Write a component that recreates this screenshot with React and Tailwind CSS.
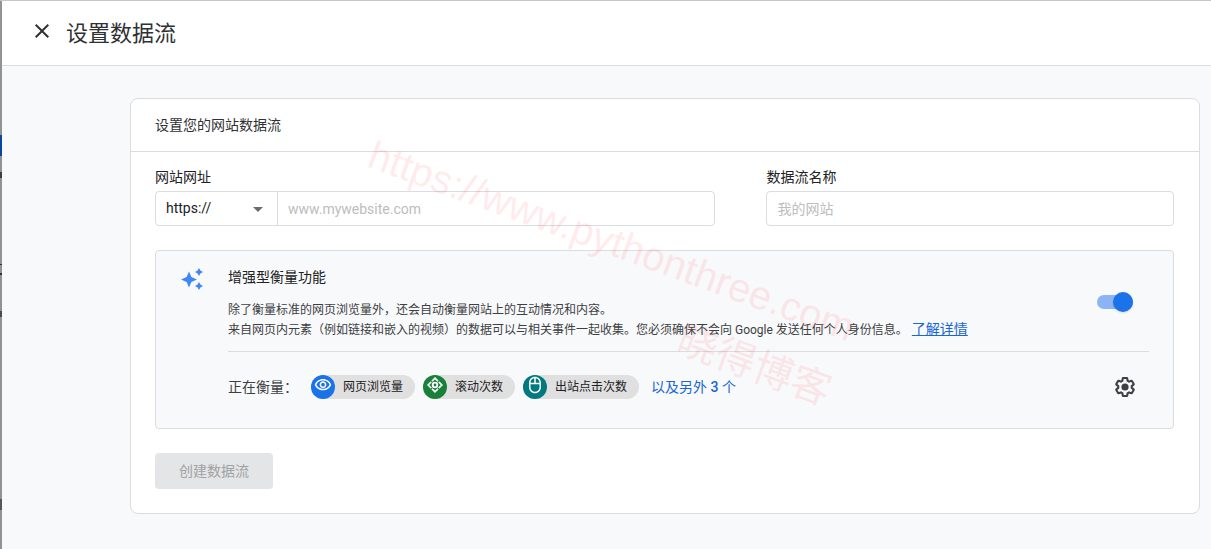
import { useState } from 'react'
import clsx from 'clsx'
import { MdArrowDropDown, MdClose, MdOutlineMouse, MdOutlineVisibility } from 'react-icons/md'

function SparkleIcon() {
  return (
    <svg viewBox="0 0 24 24" className="w-6 h-6 shrink-0" fill="#4285f4" aria-hidden="true">
      <path d="M9 4.500 11.400 10.100 17 12.500 11.400 14.900 9 20.500 6.600 14.900 1 12.500 6.600 10.100z" />
      <path d="M19 1 20.400 3.600 23 5 20.400 6.400 19 9 17.600 6.400 15 5 17.600 3.600z" />
      <path d="M19 15 20.400 17.600 23 19 20.400 20.400 19 23 17.600 20.400 15 19 17.600 17.600z" />
    </svg>
  )
}

function ScrollIcon() {
  return (
    <svg viewBox="0 0 16 16" className="w-4 h-4" fill="none" stroke="#fff" aria-hidden="true">
      <path d="M8 1.200 14.800 8 8 14.800 1.200 8z" strokeWidth="1.700" />
      <path d="M3.200 3.200 5.200 5.200M12.800 3.200 10.800 5.200M3.200 12.800 5.200 10.800M12.800 12.800 10.800 10.800" stroke="#188038" strokeWidth="1.200" />
      <circle cx="8" cy="8" r="2.300" strokeWidth="1.800" />
    </svg>
  )
}

function GearIcon() {
  return (
    <svg viewBox="0 0 24 24" className="w-6 h-6" aria-hidden="true">
      <path
        transform="translate(1.200 1.200) scale(0.900)"
        fill="none"
        stroke="currentColor"
        strokeWidth="2.300"
        strokeLinejoin="round"
        d="M19.430 12.980c.040-.320.070-.640.070-.980 0-.340-.030-.660-.070-.980l2.110-1.650c.190-.150.240-.420.120-.640l-2-3.460a.5.5 0 0 0-.610-.220l-2.490 1c-.520-.4-1.080-.730-1.690-.980l-.380-2.650A.488.488 0 0 0 14 2h-4c-.250 0-.460.180-.490.420l-.380 2.650c-.610.250-1.170.590-1.690.980l-2.490-1a.5.5 0 0 0-.610.220l-2 3.460c-.130.220-.070.490.120.640l2.110 1.650c-.040.320-.070.650-.070.980 0 .330.030.660.070.980l-2.110 1.650c-.190.150-.240.420-.120.640l2 3.460a.5.5 0 0 0 .610.220l2.490-1c.520.4 1.080.730 1.690.980l.380 2.650c.030.240.240.420.490.420h4c.250 0 .460-.180.490-.420l.380-2.650c.610-.250 1.170-.590 1.690-.980l2.490 1a.5.5 0 0 0 .610-.220l2-3.460c.120-.220.070-.490-.120-.640z"
      />
      <circle cx="12" cy="12" r="3.600" fill="currentColor" />
    </svg>
  )
}

const CHIPS = [
  { label: '网页浏览量', bg: 'bg-[#1a73e8]', icon: <MdOutlineVisibility size={18} /> },
  { label: '滚动次数', bg: 'bg-[#188038]', icon: <ScrollIcon /> },
  { label: '出站点击次数', bg: 'bg-[#00797f]', icon: <MdOutlineMouse size={18} /> },
]

function Chip({ label, bg, icon }) {
  return (
    <li className="flex items-center h-6 rounded-full bg-[#e0e0e0] pr-3">
      <span className={clsx('flex justify-center w-6 h-6 pb-1 items-center rounded-full text-white', bg)}>
        {icon}
      </span>
      <span className="ml-2 text-xs text-[#202124]">{label}</span>
    </li>
  )
}

function Toggle({ checked, onChange }) {
  return (
    <label className="relative flex items-center w-9 h-5 shrink-0 cursor-pointer">
      <input
        type="checkbox"
        checked={checked}
        onChange={e => onChange(e.target.checked)}
        aria-label="增强型衡量功能"
        className="peer absolute inset-0 w-full h-full opacity-0 cursor-pointer"
      />
      <span className="w-full h-[14px] rounded-full bg-gray-300 peer-checked:bg-[#8cb4f5]" />
      <span className="absolute left-0 w-5 h-5 rounded-full bg-white shadow peer-checked:left-4 peer-checked:bg-[#1a73e8] pointer-events-none" />
    </label>
  )
}

// Sliver of the dimmed page left visible behind the sheet
function Backdrop() {
  return (
    <div className="w-[2px] shrink-0 bg-[#919294] flex flex-col" aria-hidden="true">
      <div className="h-[134px]" />
      <div className="h-[21px] bg-[#0b45a0]" />
      <div className="mt-4 h-[6px] bg-[#3c3d3f]" />
      <div className="mt-[86px] h-px bg-[#2f3033]" />
      <div className="mt-2 h-[2px] bg-[#2f3033]" />
      <div className="mt-9 h-[6px] bg-[#4b4c4f]" />
      <div className="mt-[182px] h-[11px] bg-[#55565a]" />
    </div>
  )
}

function Watermark() {
  return (
    <div
      aria-hidden="true"
      className="absolute left-[382px] top-[120px] origin-top-left rotate-[20deg] text-right text-[40px] leading-[68px] whitespace-nowrap text-[#ff0014]/8 pointer-events-none select-none font-['Liberation_Sans','Noto_Sans_CJK_SC',sans-serif]"
    >
      <p>https://www.pythonthree.com</p>
      <p>晓得博客</p>
    </div>
  )
}

export default function App() {
  const [protocol, setProtocol] = useState('https://')
  const [url, setUrl] = useState('')
  const [name, setName] = useState('')
  const [enhanced, setEnhanced] = useState(true)

  return (
    <div className="relative flex min-h-screen overflow-hidden border-t border-[#c6c6c8] bg-[#f8f9fa] text-sm text-[#202124] font-[Roboto,'Noto_Sans_CJK_SC',sans-serif]">
      <Backdrop />

      <div className="flex-1 min-w-0">
        <header className="flex items-center h-[65px] pl-7 bg-white border-b border-[#dadce0]">
          <button type="button" aria-label="关闭" className="pb-1 text-[#303134]">
            <MdClose size={24} />
          </button>
          <h1 className="ml-3 pt-px text-[22px] leading-7 text-[#303134]">设置数据流</h1>
        </header>

        <main className="pt-8 pl-32 pr-[11px] pb-8">
          <section className="rounded-lg border border-[#dadce0] bg-white">
            <h2 className="px-6 py-4 leading-5 border-b border-[#dadce0] text-[#303134]">设置您的网站数据流</h2>

            <form className="pl-6 pr-[25px] pt-[15px] pb-6" onSubmit={e => e.preventDefault()}>
              <div className="grid grid-cols-[11fr_8fr] gap-[51px]">
                <div>
                  <label htmlFor="site-url" className="block leading-5 mb-1">网站网址</label>
                  <div className="flex h-[35px] rounded border border-[#dadce0]">
                    <div className="relative w-[122px] shrink-0 border-r border-[#dadce0]">
                      <select
                        aria-label="协议"
                        value={protocol}
                        onChange={e => setProtocol(e.target.value)}
                        className="w-full h-full pl-[10px] pb-px appearance-none bg-transparent outline-none"
                      >
                        <option>https://</option>
                        <option>http://</option>
                      </select>
                      <MdArrowDropDown size={24} className="absolute right-[7px] top-[5px] text-[#6b6c6f] pointer-events-none" />
                    </div>
                    <input
                      id="site-url"
                      value={url}
                      onChange={e => setUrl(e.target.value)}
                      placeholder="www.mywebsite.com"
                      className="flex-1 min-w-0 px-[10px] bg-transparent outline-none placeholder:text-[#bdbdbd]"
                    />
                  </div>
                </div>
                <div>
                  <label htmlFor="stream-name" className="block leading-5 mb-1">数据流名称</label>
                  <input
                    id="stream-name"
                    value={name}
                    onChange={e => setName(e.target.value)}
                    placeholder="我的网站"
                    className="block w-full h-[35px] px-[10px] rounded border border-[#dadce0] outline-none placeholder:text-[#bdbdbd]"
                  />
                </div>
              </div>

              {/* Enhanced measurement */}
              <div className="flex mt-6 px-6 py-4 rounded-sm border border-[#dadce0] bg-[#f8f9fa]">
                <SparkleIcon />
                <div className="flex-1 min-w-0 ml-6">
                  <div className="flex items-center justify-between pb-[11px] border-b border-[#dadce0]">
                    <div>
                      <h3 className="leading-5">增强型衡量功能</h3>
                      <p className="mt-[14px] text-xs leading-[19px] text-[#3c4043]">
                        除了衡量标准的网页浏览量外，还会自动衡量网站上的互动情况和内容。
                        <br />
                        来自网页内元素（例如链接和嵌入的视频）的数据可以与相关事件一起收集。您必须确保不会向 Google 发送任何个人身份信息。
                        <a href="#details" className="ml-1 text-sm leading-[19px] text-[#1967d2] underline">了解详情</a>
                      </p>
                    </div>
                    <div className="pr-4 pb-1">
                      <Toggle checked={enhanced} onChange={setEnhanced} />
                    </div>
                  </div>

                  <div className="flex items-center pt-[23px] pb-[13px]">
                    <span className="text-[#3c4043]">正在衡量：</span>
                    <ul className="flex gap-2 ml-[13px]">
                      {CHIPS.map(chip => <Chip key={chip.label} {...chip} />)}
                    </ul>
                    <button type="button" className="ml-3 text-[#1967d2]">
                      以及另外 <span className="font-medium">3</span> 个
                    </button>
                    <button type="button" aria-label="设置" className="ml-auto mr-3 text-[#3c4043]">
                      <GearIcon />
                    </button>
                  </div>
                </div>
              </div>

              <button type="submit" disabled className="mt-6 h-9 px-6 rounded bg-[#e4e5e6] text-[#a0a2a5]">
                创建数据流
              </button>
            </form>
          </section>
        </main>
      </div>

      <Watermark />
    </div>
  )
}
